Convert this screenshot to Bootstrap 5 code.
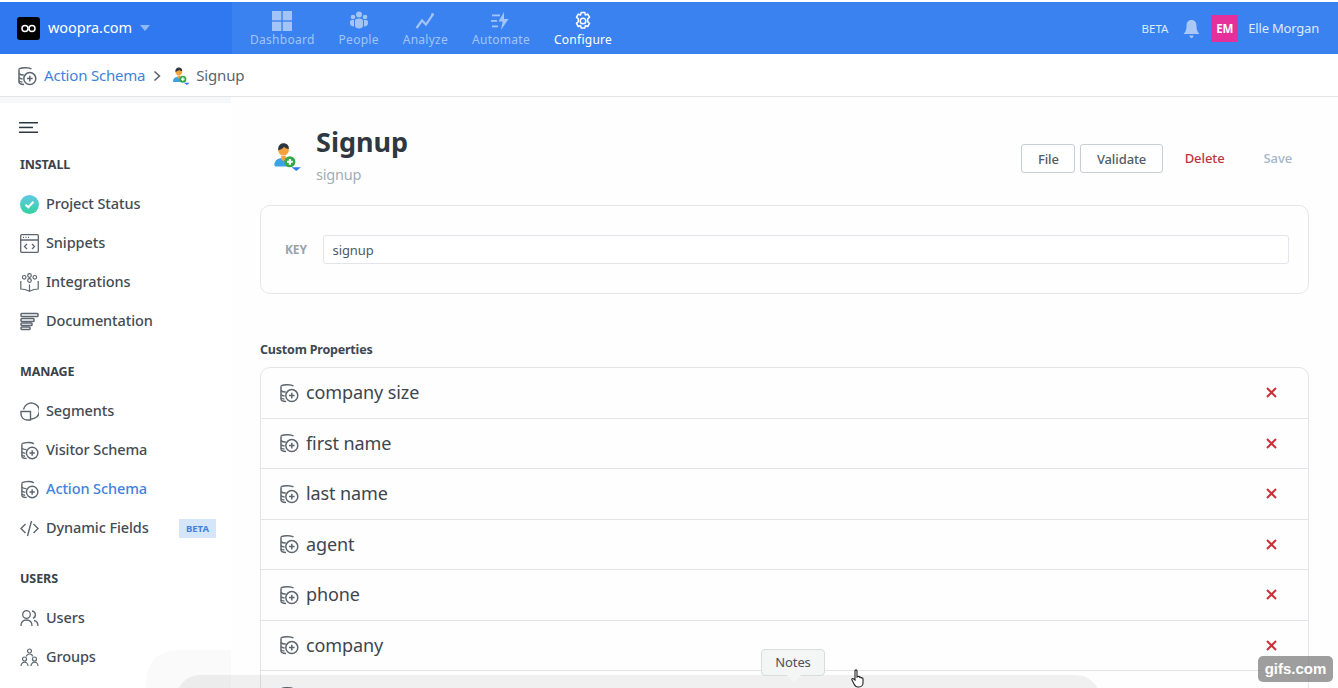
<!DOCTYPE html>
<html lang="en">

<head>
  <meta charset="UTF-8" />
  <meta name="viewport" content="width=device-width, initial-scale=1.0" />
  <link href="https://cdn.jsdelivr.net/npm/bootstrap@5.3.0/dist/css/bootstrap.min.css" rel="stylesheet" />
  <title>Signup - Action Schema</title>
  <style>
    html, body { height: 688px; overflow: hidden; }
    body { background: #fff; color: #343c44; font-family: "Noto Sans", "Open Sans", sans-serif; padding-top: 2px; position: relative; }

    .top-bar { background: #3b82f1; height: 52px; padding: 0; align-items: stretch; flex-wrap: nowrap; justify-content: flex-start; }
    .brand-box { width: 232px; background: #2f78ef; padding-left: 17px; color: #fff; font-size: 14.5px; letter-spacing: -.1px; }
    .brand-logo { width: 23px; height: 23px; background: #000; border-radius: 3px; }
    .brand-caret { width: 0; height: 0; border-left: 5px solid transparent; border-right: 5px solid transparent; border-top: 6px solid #8fb8f5; }
    .top-links { padding-left: 18px; gap: 24px; }
    .top-item { color: #a3c4f8; font-size: 12px; letter-spacing: .27px; line-height: 14px; padding-top: 9px; text-decoration: none; }
    .top-item.on { color: #fff; }
    .top-item svg { display: block; margin-bottom: 2px; }
    .top-right { color: #dce9fd; font-size: 13px; letter-spacing: -.2px; padding: 2px 19px 0 0; }
    .beta-top { font-size: 11.5px; letter-spacing: 0; }
    .bell-icon { margin: 0 11px 0 15px; }
    .avatar-box { width: 27px; height: 27px; background: #e5309b; color: #fff; font-size: 11.5px; font-weight: 700; letter-spacing: 0; margin-right: 10px; margin-top: -1px; }

    .crumb-bar { height: 43px; border-bottom: 1px solid #e3e5e9; padding: 1px 0 0 17px; font-size: 15px; letter-spacing: -.2px; }
    .crumb-bar a { color: #3f82dc; text-decoration: none; }
    .crumb-sep { margin: 0 8px 0 8px; }
    .crumb-agent { margin: 0 6px 0 3px; }
    .crumb-last { color: #5a646e; }

    .side-col { width: 231px; flex: none; border-top: 6px solid #f7f8f9; padding: 19px 0 0 20px; height: 591px; }
    .burger-lines { width: 19px; height: 11px; margin-left: -1px; margin-bottom: 24px; }
    .side-head { font-size: 12.5px; font-weight: 700; color: #39424b; line-height: 16px; letter-spacing: -.1px; margin-bottom: 11.5px; }
    .side-link { height: 39px; font-size: 14.5px; font-weight: 500; letter-spacing: -.1px; color: #434c55; text-decoration: none; width: 196px; }
    .side-link.on { color: #3f82dc; }
    .side-link svg { flex: none; margin-right: 7px; }
    .side-group { margin-bottom: 23.5px; }
    .beta-tag { background: #d6e6fa; color: #3f82dc; font-size: 9.5px; font-weight: 700; padding: 3px 7px; margin-left: auto; line-height: 13px; letter-spacing: 0; border-radius: 0; }

    .main-col { flex: 1; padding: 0 29px; background: #fefefe; }
    .head-row { height: 108px; padding-top: 27px; }
    .page-title { font-size: 27px; font-weight: 700; color: #2f3840; line-height: 36px; margin: 0; }
    .page-key { color: #a3adb7; font-size: 14.5px; line-height: 20px; margin-top: 4px; letter-spacing: -.2px; }
    .head-icon { width: 56px; padding: 17px 0 0 13px; }
    .act-group { margin-top: 20px; }
    .act-btn { font-size: 13px; font-weight: 500; color: #535c65; border: 1px solid #c8ced6; border-radius: 3px; height: 29px; padding: 0 15.5px; background: #fff; letter-spacing: -.1px; line-height: 26px; }
    .act-gap { margin-right: 5px; }
    .text-act { font-size: 13px; font-weight: 500; letter-spacing: -.1px; }
    .act-del { color: #c0343c; margin-left: 22px; }
    .act-save { color: #a5b6c8; margin: 0 17px 0 39px; }
    .key-card { height: 89px; border: 1px solid #e4e7ea; border-radius: 10px; padding: 0 19px 0 24px; background: #fefefe; }
    .key-label { width: 39px; font-size: 12px; font-weight: 700; color: #98a3ae; letter-spacing: -.1px; }
    .key-input { height: 29px; border: 1px solid #e2e5e9; border-radius: 3px; padding: 0 9px; font-size: 13px; color: #4e5760; letter-spacing: -.1px; }
    .sec-label { font-size: 12.5px; font-weight: 700; color: #3f4850; margin: 48px 0 9px; line-height: 16px; letter-spacing: -.2px; }
    .prop-list { border-radius: 10px 10px 0 0; }
    .prop-row { height: 50.5px; padding: 0 31px 0 18px; border-color: #e2e4e8; font-size: 18px; color: #3d464e; letter-spacing: -.1px; background: #fefefe; }
    .prop-row:first-child { height: 51.5px; }
    .prop-row svg.schema { margin-right: 7px; flex: none; color: #5d666f; }

    .dock-shade { position: absolute; left: 176px; top: 675px; width: 924px; height: 30px; background: rgba(0,0,0,.055); border-radius: 24px 24px 0 0; }
    .dock-fade { position: absolute; left: 146px; top: 650px; width: 85px; height: 40px; background: #fafafb; border-radius: 30px 0 0 0; }
    .notes-tip { position: absolute; left: 761px; top: 649px; width: 64px; height: 27px; background: #f4f5f5; border: 1px solid #d9dcdc; border-radius: 4px; font-size: 13px; color: #4b5259; text-align: center; line-height: 25px; letter-spacing: -.1px; }
    .notes-tip::after { content: ""; position: absolute; left: 25px; top: 25px; border-left: 7px solid transparent; border-right: 7px solid transparent; border-top: 7px solid #f4f5f5; }
    .hand-cursor { position: absolute; left: 851px; top: 669px; }
    .gif-mark { position: absolute; left: 1258px; top: 656px; width: 75px; height: 26px; background: rgba(120,120,120,.72); border-radius: 5px; color: #fff; font-size: 15px; font-weight: 700; text-align: center; line-height: 25px; font-family: "Liberation Sans", sans-serif; }
  </style>
</head>

<body>
  <svg width="0" height="0" class="position-absolute">
    <symbol id="schema" viewBox="0 0 20 20">
      <g fill="none" stroke="currentColor" stroke-width="1.5">
        <path d="M2 3.500C2 1.600 12 .8 14.500 3" />
        <path d="M2 3.500V16c0 1.500 2 2.300 5 2.400" />
        <path d="M2 7.500c1 1.200 3 1.600 4.800 1.600M2 11.500c1 1 2.400 1.400 3.600 1.500M2 15c.9.7 2 1 3.400 1.100" />
        <circle cx="12.800" cy="12.600" r="6" />
        <path d="M12.800 9.800v5.600M10 12.600h5.600" />
      </g>
    </symbol>
    <symbol id="agent" viewBox="0 0 24 26">
      <path d="M1 21c0-4 3-6 6-6h4l3 7H2z" fill="#3aa3e3" />
      <circle cx="9" cy="8" r="4.600" fill="#f5a13c" />
      <path d="M4.400 8C4 3.400 7 2 9 2s5 1.400 4.600 5c-2-.2-3.400-1-4.200-2C8.600 6.500 6.400 7.500 4.400 8z" fill="#2d3540" />
      <path d="M7 13h4v3l-2 1.500L7 16z" fill="#f5a13c" />
      <circle cx="14.500" cy="18" r="4.800" fill="#3aa64a" />
      <path d="M14.500 15.500v5M12 18h5" stroke="#fff" stroke-width="1.800" />
      <path d="M16 22.800h8l-4 3.200z" fill="#2f78ef" />
    </symbol>
  </svg>

  <nav class="navbar top-bar">
    <div class="brand-box d-flex align-items-center">
      <span class="brand-logo d-flex align-items-center justify-content-center me-2">
        <svg width="15" height="9" viewBox="0 0 15 9" fill="none" stroke="#fff" stroke-width="1.500">
          <circle cx="4" cy="4.500" r="3" />
          <circle cx="11" cy="4.500" r="3" />
        </svg>
      </span>
      <span>woopra.com</span>
      <span class="brand-caret ms-2"></span>
    </div>
    <div class="top-links d-flex">
      <a class="top-item d-flex flex-column align-items-center" href="#">
        <svg width="20" height="20" viewBox="0 0 20 20" fill="currentColor"><rect width="9.300" height="9.300" /><rect x="10.700" width="9.300" height="9.300" /><rect y="10.700" width="9.300" height="9.300" /><rect x="10.700" y="10.700" width="9.300" height="9.300" /></svg>
        Dashboard
      </a>
      <a class="top-item d-flex flex-column align-items-center" href="#">
        <svg width="20" height="20" viewBox="0 0 20 20" fill="currentColor"><circle cx="10" cy="3.500" r="3" /><circle cx="4" cy="6" r="2.300" /><circle cx="16" cy="6" r="2.300" /><path d="M6 9.500c0-1 1-2 4-2s4 1 4 2v5c0 2-1.500 3-4 3s-4-1-4-3z" /><path d="M1 10.500C1 9 2.500 9 5 9v6.500c-2 0-4-1-4-3zM19 10.500C19 9 17.500 9 15 9v6.500c2 0 4-1 4-3z" /></svg>
        People
      </a>
      <a class="top-item d-flex flex-column align-items-center" href="#">
        <svg width="20" height="20" viewBox="0 0 20 20" fill="none" stroke="currentColor" stroke-width="2.200"><path d="M1.500 17 7 9.500l4 4L17.500 4" /><circle cx="17.500" cy="3.500" r="1.500" fill="currentColor" stroke="none" /></svg>
        Analyze
      </a>
      <a class="top-item d-flex flex-column align-items-center" href="#">
        <svg width="20" height="20" viewBox="0 0 20 20" fill="currentColor"><path d="M13 1 7.500 10.500h4L10 19l7.500-11h-4.500z" /><rect x="1" y="3.500" width="8" height="1.800" /><rect x="0" y="9" width="6" height="1.800" /><rect x="1" y="14.500" width="6" height="1.800" /></svg>
        Automate
      </a>
      <a class="top-item on d-flex flex-column align-items-center" href="#">
        <svg width="20" height="20" viewBox="0 0 20 20" fill="none" stroke="currentColor" stroke-width="1.500"><path d="M8.200 1.500h3.600l.6 2.500 2.300-.9 1.800 3.100-1.800 1.700v2.800l1.800 1.700-1.800 3.100-2.300-.9-.6 2.400H8.200l-.6-2.400-2.300.9-1.800-3.100 1.800-1.700V7.900L3.500 6.200l1.800-3.100 2.300.9z" stroke-linejoin="round" /><circle cx="10" cy="10" r="2.800" /></svg>
        Configure
      </a>
    </div>
    <div class="top-right d-flex align-items-center ms-auto">
      <span class="beta-top">BETA</span>
      <svg class="bell-icon" width="17" height="20" viewBox="0 0 17 20" fill="#a9c8f8"><path d="M8.500 1C5 1 3.500 3.500 3.500 7c0 4-1 6-3 8h16c-2-2-3-4-3-8 0-3.500-1.500-6-5-6z" /><path d="M6.500 16.500h4c0 1.500-1 2.500-2 2.500s-2-1-2-2.500z" /></svg>
      <span class="avatar-box d-flex align-items-center justify-content-center">EM</span>
      <span>Elle Morgan</span>
    </div>
  </nav>

  <div class="crumb-bar d-flex align-items-center">
    <svg width="20" height="20" style="color:#5d666f;margin-right:7px"><use href="#schema" /></svg>
    <a href="#">Action Schema</a>
    <svg class="crumb-sep" width="8" height="12" viewBox="0 0 8 12" fill="none" stroke="#555e67" stroke-width="1.500"><path d="M1.500 1.500 6.500 6l-5 4.500" /></svg>
    <svg class="crumb-agent" width="18" height="19"><use href="#agent" /></svg>
    <span class="crumb-last">Signup</span>
  </div>

  <div class="d-flex">
    <aside class="side-col">
      <svg class="burger-lines d-block" viewBox="0 0 19 11" fill="#2f3840"><rect width="19" height="1.500" /><rect y="4.700" width="14" height="1.500" /><rect y="9.500" width="19" height="1.500" /></svg>

      <div class="side-group">
        <div class="side-head">INSTALL</div>
        <a class="side-link d-flex align-items-center" href="#">
          <svg width="19" height="19" viewBox="0 0 19 19"><defs><linearGradient id="okGrad" x1="0" y1="0" x2="0" y2="1"><stop offset="0" stop-color="#62c9e4" /><stop offset="1" stop-color="#33d1a0" /></linearGradient></defs><circle cx="9.500" cy="9.500" r="9.500" fill="url(#okGrad)" /><path d="M5.500 9.800 8.300 12.300 13.500 6.800" fill="none" stroke="#fff" stroke-width="2" /></svg>
          Project Status
        </a>
        <a class="side-link d-flex align-items-center" href="#">
          <svg width="19" height="19" viewBox="0 0 19 19" fill="none" stroke="#5d666f" stroke-width="1.300"><rect x=".7" y=".7" width="17.600" height="17.600" rx="1" /><path d="M.7 6h17.600M7 10l-2.500 2.500L7 15M12 10l2.500 2.500L12 15" /><path d="M3 3.300h1M5.500 3.300h1M8 3.300h1" /></svg>
          Snippets
        </a>
        <a class="side-link d-flex align-items-center" href="#">
          <svg width="19" height="19" viewBox="0 0 19 19" fill="none" stroke="#5d666f" stroke-width="1.200"><circle cx="9.500" cy="2.500" r="1.800" /><circle cx="4.200" cy="4.300" r="1.800" /><circle cx="14.800" cy="4.300" r="1.800" /><circle cx="9.500" cy="7.500" r="1.800" /><path d="M.8 8v8c3 0 6 1 8.700 2.300 2.700-1.300 5.700-2.300 8.700-2.300V8M9.500 11.500v6.800" /></svg>
          Integrations
        </a>
        <a class="side-link d-flex align-items-center" href="#">
          <svg width="19" height="19" viewBox="0 0 19 19" fill="none" stroke="#5d666f" stroke-width="1.500"><rect x="1" y="1.500" width="17" height="3" rx=".8" /><rect x="1" y="6.500" width="13" height="3" rx=".8" /><rect x="1" y="11" width="11" height="2.500" rx=".8" /><rect x="1" y="15" width="9" height="2.500" rx=".8" /></svg>
          Documentation
        </a>
      </div>

      <div class="side-group">
        <div class="side-head">MANAGE</div>
        <a class="side-link d-flex align-items-center" href="#">
          <svg width="19" height="19" viewBox="0 0 19 19" fill="none" stroke="#5d666f" stroke-width="1.400"><path d="M3.500 7.500A8 8 0 1 1 11 17" /><path d="M1 9.500h9.500V18H7c-3.500 0-6-3-6-6z" /></svg>
          Segments
        </a>
        <a class="side-link d-flex align-items-center" href="#">
          <svg width="19" height="19" style="color:#5d666f"><use href="#schema" /></svg>
          Visitor Schema
        </a>
        <a class="side-link on d-flex align-items-center" href="#">
          <svg width="19" height="19" style="color:#5d666f"><use href="#schema" /></svg>
          Action Schema
        </a>
        <a class="side-link d-flex align-items-center" href="#">
          <svg width="19" height="19" viewBox="0 0 19 19" fill="none" stroke="#5d666f" stroke-width="1.400"><path d="M5.500 5 1 9.500 5.500 14M13.500 5 18 9.500 13.500 14M11.500 2 7.500 17" /></svg>
          Dynamic Fields
          <span class="badge beta-tag">BETA</span>
        </a>
      </div>

      <div class="side-group">
        <div class="side-head">USERS</div>
        <a class="side-link d-flex align-items-center" href="#">
          <svg width="19" height="19" viewBox="0 0 19 19" fill="none" stroke="#5d666f" stroke-width="1.300"><circle cx="6.500" cy="5.500" r="3.800" /><path d="M12 2a3.800 3.800 0 0 1 1 7.300M1 17c0-4 2.500-6 5.500-6S12 13 12 17M14 11.500c2.500.5 4 2.500 4 5.500" /></svg>
          Users
        </a>
        <a class="side-link d-flex align-items-center" href="#">
          <svg width="19" height="19" viewBox="0 0 19 19" fill="none" stroke="#5d666f" stroke-width="1.200"><circle cx="9.500" cy="3" r="2" /><path d="M6.500 8.500c0-1.500 1.500-2.500 3-2.500s3 1 3 2.500" /><circle cx="4.500" cy="11" r="2" /><circle cx="14.500" cy="11" r="2" /><path d="M1 18c0-2 1.500-3.800 3.500-3.800S8 16 8 18M11 18c0-2 1.500-3.800 3.500-3.800S18 16 18 18" /></svg>
          Groups
        </a>
      </div>
    </aside>

    <main class="main-col">
      <div class="head-row d-flex">
        <div class="head-icon"><svg width="28" height="30"><use href="#agent" /></svg></div>
        <div>
          <h1 class="page-title">Signup</h1>
          <div class="page-key">signup</div>
        </div>
        <div class="act-group d-flex align-items-center ms-auto align-self-start">
          <button class="btn act-btn act-gap" type="button">File</button>
          <button class="btn act-btn" type="button">Validate</button>
          <span class="text-act act-del">Delete</span>
          <span class="text-act act-save">Save</span>
        </div>
      </div>

      <div class="card key-card flex-row align-items-center">
        <label class="key-label" for="keyField">KEY</label>
        <input id="keyField" class="form-control key-input" value="signup" />
      </div>

      <div class="sec-label">Custom Properties</div>
      <ul class="list-group prop-list">
        <li class="list-group-item prop-row d-flex align-items-center"><svg class="schema" width="20" height="20"><use href="#schema" /></svg>company size<span class="ms-auto prop-x"></span></li>
        <li class="list-group-item prop-row d-flex align-items-center"><svg class="schema" width="20" height="20"><use href="#schema" /></svg>first name<span class="ms-auto prop-x"></span></li>
        <li class="list-group-item prop-row d-flex align-items-center"><svg class="schema" width="20" height="20"><use href="#schema" /></svg>last name<span class="ms-auto prop-x"></span></li>
        <li class="list-group-item prop-row d-flex align-items-center"><svg class="schema" width="20" height="20"><use href="#schema" /></svg>agent<span class="ms-auto prop-x"></span></li>
        <li class="list-group-item prop-row d-flex align-items-center"><svg class="schema" width="20" height="20"><use href="#schema" /></svg>phone<span class="ms-auto prop-x"></span></li>
        <li class="list-group-item prop-row d-flex align-items-center"><svg class="schema" width="20" height="20"><use href="#schema" /></svg>company<span class="ms-auto prop-x"></span></li>
        <li class="list-group-item prop-row d-flex align-items-center"><svg class="schema" width="20" height="20"><use href="#schema" /></svg></li>
      </ul>
    </main>
  </div>

  <div class="dock-fade"></div>
  <div class="dock-shade"></div>
  <div class="notes-tip">Notes</div>
  <svg class="hand-cursor" width="15" height="19" viewBox="0 0 15 19" fill="#fff" stroke="#222" stroke-width="1.100"><path d="M4 2c0-1.500 2-1.500 2 0v6l1-.5c1-.3 1.500.2 1.500.8 1-.5 1.700 0 1.800.6 1-.4 1.700.2 1.700 1V14c0 2-1.500 4-4 4H7c-2 0-3-1-4-3L1 11c-.6-1 .6-2.200 1.800-1L4 11z" /></svg>
  <div class="gif-mark">gifs.com</div>

  <script>
    // red remove crosses on each property row
    document.querySelectorAll('.prop-x').forEach(function (el) {
      el.innerHTML = '<svg width="11" height="11" viewBox="0 0 11 11" fill="none" stroke="#cb3138" stroke-width="2" class="d-block"><path d="M1 1l9 9M10 1l-9 9" /></svg>';
    });
  </script>
  <script src="https://cdn.jsdelivr.net/npm/bootstrap@5.3.0/dist/js/bootstrap.bundle.min.js"></script>
</body>

</html>
